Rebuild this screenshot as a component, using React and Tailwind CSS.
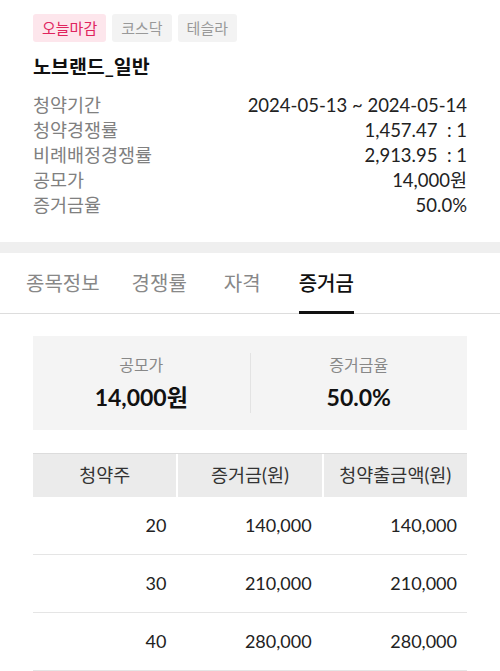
const font = { fontFamily: "Lato, 'Noto Sans CJK KR', sans-serif" };

const infoRows = [
  ["청약기간", "2024-05-13 ~ 2024-05-14"],
  ["청약경쟁률", "1,457.47\u00a0\u00a0: 1"],
  ["비례배정경쟁률", "2,913.95\u00a0\u00a0: 1"],
  ["공모가", "14,000원"],
  ["증거금율", "50.0%"],
];

const tabs = [
  { label: "종목정보", cls: "ml-[26px]" },
  { label: "경쟁률", cls: "ml-[32px]" },
  { label: "자격", cls: "ml-[37px]" },
  { label: "증거금", cls: "ml-[38px]", active: true },
];

const rows = [
  ["20", "140,000", "140,000"],
  ["30", "210,000", "210,000"],
  ["40", "280,000", "280,000"],
];

export default function App() {
  return (
    <div className="w-[500px] min-h-[671px] bg-white" style={font}>
      <div className="px-[33px] pt-[14px]">
        <div className="flex gap-[6px]">
          <span className="flex h-[28px] items-center rounded-[3px] bg-[#fde6ec] px-[9px] text-[15px] text-[#e0245e]">
            오늘마감
          </span>
          <span className="flex h-[28px] items-center rounded-[3px] bg-[#f3f3f3] px-[9px] text-[15px] text-[#999]">
            코스닥
          </span>
          <span className="flex h-[28px] items-center rounded-[3px] bg-[#f3f3f3] px-[9px] text-[15px] text-[#999]">
            테슬라
          </span>
        </div>
        <h1 className="mt-[13px] text-[19.5px] font-bold leading-[24px] text-[#111]">노브랜드_일반</h1>
        <div className="mt-[14px] mb-[24px]">
          {infoRows.map(([label, value]) => (
            <div key={label} className="flex h-[25px] items-center justify-between text-[18.5px]">
              <span className="text-[#808080]">{label}</span>
              <span className="text-[#222]">{value}</span>
            </div>
          ))}
        </div>
      </div>

      <div className="h-[11px] bg-[#efefef]" />

      <div className="flex h-[61px] border-b border-[#dddddd]">
        {tabs.map((tab) => (
          <div
            key={tab.label}
            className={`relative flex items-center text-[20px] ${tab.cls} ${
              tab.active ? "font-medium text-[#111]" : "text-[#888]"
            }`}
          >
            {tab.label}
            {tab.active && <span className="absolute bottom-[-1px] left-0 h-[3px] w-[55px] bg-[#111]" />}
          </div>
        ))}
      </div>

      <div className="px-[33px] pt-[22px]">
        <div className="flex h-[94px] items-center bg-[#f4f4f4]">
          <div className="flex flex-1 flex-col items-center">
            <span className="text-[16px] leading-[22px] text-[#888]">공모가</span>
            <span className="mt-[6px] text-[23px] font-bold leading-[30px] text-[#111]">14,000원</span>
          </div>
          <div className="h-[60px] w-px bg-[#e3e3e3]" />
          <div className="flex flex-1 flex-col items-center">
            <span className="text-[16px] leading-[22px] text-[#888]">증거금율</span>
            <span className="mt-[6px] text-[23px] font-bold leading-[30px] text-[#111]">50.0%</span>
          </div>
        </div>

        <div className="mt-[23px]">
          <div className="grid h-[44px] grid-cols-3 gap-[2px] border-t border-[#dcdcdc] bg-white text-[18.5px] text-[#333]">
            <div className="flex items-center justify-center bg-[#ebebeb]">청약주</div>
            <div className="flex items-center justify-center bg-[#ebebeb]">증거금(원)</div>
            <div className="flex items-center justify-center bg-[#ebebeb]">청약출금액(원)</div>
          </div>
          {rows.map((row) => (
            <div key={row[0]} className="grid h-[58px] grid-cols-3 gap-[2px] border-b border-[#e5e5e5] text-[18px] text-[#222]">
              {row.map((cell, i) => (
                <div key={i} className="flex items-center justify-end pr-[10px]">
                  {cell}
                </div>
              ))}
            </div>
          ))}
        </div>
      </div>
    </div>
  );
}
